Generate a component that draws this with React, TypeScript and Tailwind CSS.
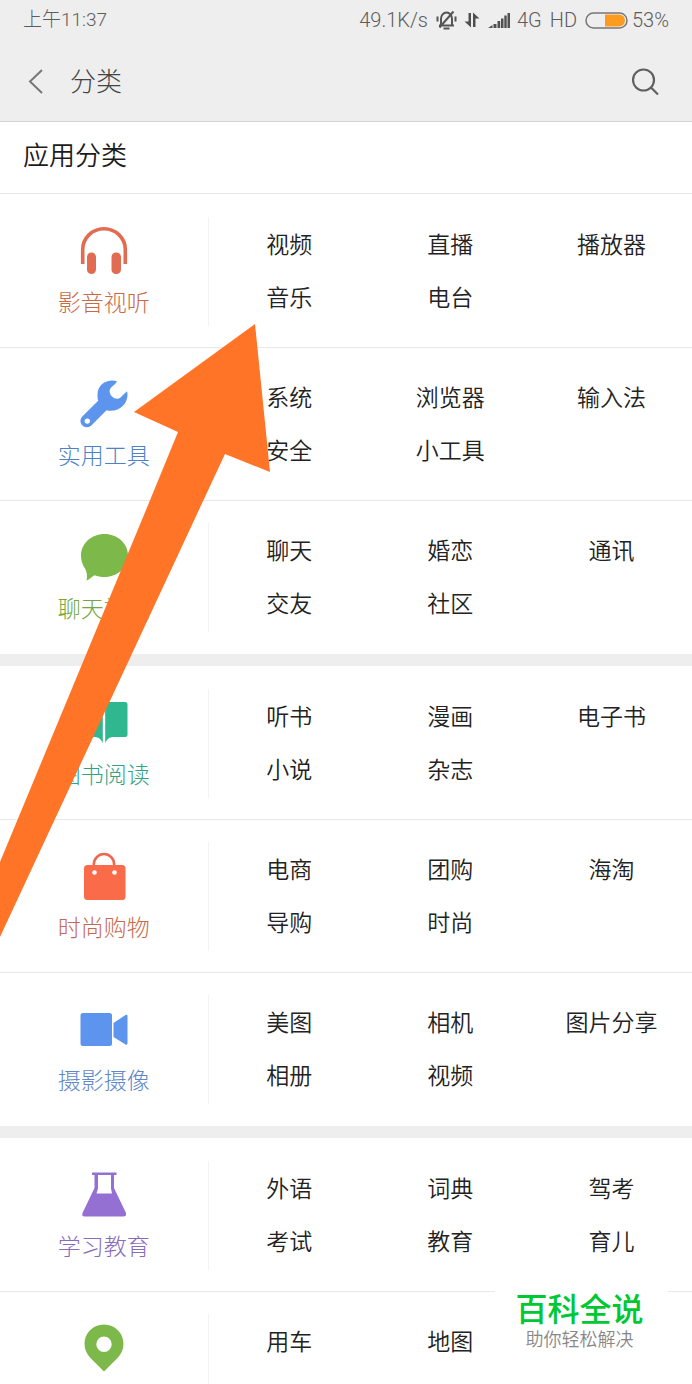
import type { ReactNode } from "react";

type Category = {
  name?: string;
  color: string;
  icon: ReactNode;
  items: string[];
};

const HeadphonesIcon = () => (
  <svg viewBox="0 0 48 48" className="size-12" aria-hidden="true">
    <path d="M2.700 37V22.500a21.300 20.700 0 0 1 42.600 0V37" fill="none" stroke="#e26c51" strokeWidth="3.600" />
    <rect x="7" y="25.500" width="9" height="21.500" rx="4.500" fill="#e26c51" />
    <rect x="31.500" y="25.500" width="9.500" height="21.500" rx="4.500" fill="#e26c51" />
  </svg>
);

const WrenchIcon = () => (
  <svg viewBox="0 0 48 48" className="size-12" aria-hidden="true">
    <path
      fillRule="evenodd"
      fill="#5c94ee"
      d="M37 1.200C29 -1.500 17.500 3 17.500 14.500C17.500 17 17.700 19 18.200 20.800L2.500 36.300C-3 42 3.500 50.500 10.800 46L26.500 30.300C38 33 47.500 24.500 47.500 15C47.500 13.500 47.300 12 46.900 11.300L40.500 17.500C37.500 20 33.500 18.500 31.500 16C29 12.500 29 9.500 31.500 7C33 5.500 35.500 4 37 1.200ZM7.300 38.400a2.700 2.700 0 1 1 0 5.400a2.700 2.700 0 0 1 0 -5.400Z"
    />
  </svg>
);

const ChatIcon = () => (
  <svg viewBox="0 0 48 48" className="size-12" aria-hidden="true">
    <path
      fill="#7cb84a"
      d="M24.500 1C37.500 1 48 10.500 48 22.500S37.500 44 24.500 44C21 44 17.500 43.300 14.500 42.200C12 43.500 9.500 46.500 6.500 47.500C7.500 43.500 7 39 5 35.500C2.500 32 1 27.500 1 22.500C1 10.500 11.500 1 24.500 1Z"
    />
  </svg>
);

const BookIcon = () => (
  <svg viewBox="0 0 48 48" className="size-12" aria-hidden="true">
    <path fill="#2fb78f" d="M3 3H19C21 3 22.800 4 22.800 6V44C20.500 40 19 38 14 38H3Q0.500 38 0.500 35.500V5.500Q0.500 3 3 3Z" />
    <path fill="#2fb78f" d="M45 3H29C27 3 25.200 4 25.200 6V44C27.500 40 29 38 34 38H45Q47.500 38 47.500 35.500V5.500Q47.500 3 45 3Z" />
  </svg>
);

const BagIcon = () => (
  <svg viewBox="0 0 48 48" className="size-12" aria-hidden="true">
    <path d="M13.800 15V12.500a10.200 10.500 0 0 1 20.400 0V15" fill="none" stroke="#e8694d" strokeWidth="2.600" />
    <rect x="4" y="13" width="41.500" height="35" rx="3.500" fill="#fa6b49" />
    <circle cx="14.500" cy="20.500" r="2.300" fill="#fff" />
    <circle cx="34.500" cy="20.500" r="2.300" fill="#fff" />
  </svg>
);

const CameraIcon = () => (
  <svg viewBox="0 0 48 48" className="size-12" aria-hidden="true">
    <rect x="0.500" y="8" width="31.500" height="33" rx="2.500" fill="#5c94ee" />
    <path fill="#5c94ee" d="M33.500 18L45.500 10Q47.500 9 47.500 11V38Q47.500 40.500 45.500 39.500L33.500 32Z" />
  </svg>
);

const FlaskIcon = () => (
  <svg viewBox="0 0 48 48" className="size-12" aria-hidden="true">
    <path
      fillRule="evenodd"
      fill="#9470d3"
      d="M12 1.500H36.500V4H34V17L46 42Q46.500 45.500 43.500 45.500H4.500Q1.500 45.500 2.500 42L14.500 17V4H12ZM18 4V17.500L16.500 22.500H32L31 17.500V4Z"
    />
  </svg>
);

const PinIcon = () => (
  <svg viewBox="0 0 48 48" className="size-12" aria-hidden="true">
    <path
      fillRule="evenodd"
      fill="#7cb84a"
      d="M24 0.500C35 0.500 43.500 9 43.500 20C43.500 25.500 41 30 38 33.500L24 47.500L10 33.500C7 30 4.500 25.500 4.500 20C4.500 9 13 0.500 24 0.500ZM24 12.500a7.700 7.700 0 1 0 0 15.400a7.700 7.700 0 0 0 0 -15.400Z"
    />
  </svg>
);

const groups: Category[][] = [
  [
    { name: "影音视听", color: "text-[#c96a45]", icon: <HeadphonesIcon />, items: ["视频", "直播", "播放器", "音乐", "电台"] },
    { name: "实用工具", color: "text-[#4c82c8]", icon: <WrenchIcon />, items: ["系统", "浏览器", "输入法", "安全", "小工具"] },
    { name: "聊天社交", color: "text-[#74a83c]", icon: <ChatIcon />, items: ["聊天", "婚恋", "通讯", "交友", "社区"] },
  ],
  [
    { name: "图书阅读", color: "text-[#2fa384]", icon: <BookIcon />, items: ["听书", "漫画", "电子书", "小说", "杂志"] },
    { name: "时尚购物", color: "text-[#c9694b]", icon: <BagIcon />, items: ["电商", "团购", "海淘", "导购", "时尚"] },
    { name: "摄影摄像", color: "text-[#6088c8]", icon: <CameraIcon />, items: ["美图", "相机", "图片分享", "相册", "视频"] },
  ],
  [
    { name: "学习教育", color: "text-[#886cbc]", icon: <FlaskIcon />, items: ["外语", "词典", "驾考", "考试", "教育", "育儿"] },
    { color: "text-[#74a83c]", icon: <PinIcon />, items: ["用车", "地图"] },
  ],
];

function StatusBar() {
  return (
    <div className="flex h-10 items-center justify-between px-[23px] font-light text-[#5c5c5c]">
      <span className="text-[19px]">上午11:37</span>
      <div className="flex items-center text-[20px]">
        <span>49.1K/s</span>
        <svg viewBox="0 0 21 20" className="ml-2 h-5 w-[21px]" fill="none" stroke="#555" strokeWidth="2" aria-hidden="true">
          <path d="M5 15V9a5.500 6.500 0 0 1 11 0V15M3 15.500H18M17.500 1.500L3.500 17.500" />
          <path d="M7.500 18.500H13.500" />
          <path d="M1.500 6.500V11.500M19.500 6.500V11.500" />
        </svg>
        <svg viewBox="0 0 16 16" className="ml-[7px] h-4 w-4" fill="#505050" aria-hidden="true">
          <path d="M4.500 1H7V15.500L0.500 9.500H4.500ZM9 0.500L15.500 6.500H11.500V15H9Z" />
        </svg>
        <svg viewBox="0 0 22 16" className="ml-2 h-4 w-[22px]" fill="#505050" aria-hidden="true">
          <path d="M0 16L4.500 13V16ZM5.500 12H8.500V16H5.500ZM9.500 9H12.200V16H9.500ZM13 6.500H15.500V16H13ZM16.300 3.500H18.700V16H16.300ZM19.500 1H22V16H19.500Z" />
        </svg>
        <span className="ml-[7px]">4G</span>
        <span className="ml-2">HD</span>
        <svg viewBox="0 0 43 17" className="ml-2 h-[17px] w-[43px]" aria-hidden="true">
          <path d="M20 2.500H34a6 6 0 0 1 0 12H20Z" fill="#fd9b20" />
          <rect x="1" y="1" width="41" height="15" rx="7.500" fill="none" stroke="#777" strokeWidth="1.500" />
        </svg>
        <span className="ml-1">53%</span>
      </div>
    </div>
  );
}

function CategoryRow({ category, first }: { category: Category; first: boolean }) {
  return (
    <section className={`flex min-h-[153px] border-t ${first ? "border-transparent" : "border-[#e8e8e8]"}`}>
      <a href="#" className={`flex w-[30%] shrink-0 flex-col items-center pt-8 ${category.color}`}>
        {category.icon}
        {category.name && <span className="mt-[13px] text-[23px] leading-8 font-light">{category.name}</span>}
      </a>
      <div className="mt-[22px] mb-[21px] grid flex-1 grid-cols-3 content-start border-l border-[#f3f3f3] pt-[2px] pb-px text-center text-[23px] leading-[53px] text-[#222]">
        {category.items.map((item) => (
          <a key={item} href="#">{item}</a>
        ))}
      </div>
    </section>
  );
}

export default function App() {
  return (
    <div className="relative h-screen overflow-hidden bg-white font-['Roboto','Noto_Sans_CJK_SC',sans-serif] font-[350]">
      {/* Status bar + title */}
      <header className="border-b border-[#d4d4d4] bg-[#eee]">
        <StatusBar />
        <div className="flex h-[81px] items-center pr-8 pl-7">
          <button aria-label="返回">
            <svg viewBox="0 0 16 26" className="h-[26px] w-4" fill="none" stroke="#777" strokeWidth="2" aria-hidden="true">
              <path d="M14 2L2 13.500L14 25" />
            </svg>
          </button>
          <h1 className="ml-[26px] flex-1 pt-[2px] text-[26px] leading-9 font-light text-[#444]">分类</h1>
          <button aria-label="搜索">
            <svg viewBox="0 0 28 28" className="size-7" fill="none" stroke="#606060" strokeWidth="2.200" aria-hidden="true">
              <circle cx="11.500" cy="13" r="10.500" />
              <path d="M19 20.500L26 27.500" />
            </svg>
          </button>
        </div>
      </header>

      <h2 className="border-b border-[#e8e8e8] px-[23px] pt-4 pb-[19px] text-[26px] leading-9 text-[#1c1c1c]">应用分类</h2>

      {/* Category groups */}
      <main>
        {groups.map((group, g) => (
          <div key={g} className={g < groups.length - 1 ? "border-b-12 border-[#eee] pb-px" : ""}>
            {group.map((category, i) => (
              <CategoryRow key={i} category={category} first={i === 0} />
            ))}
          </div>
        ))}
      </main>

      {/* Arrow pointing at 音乐 */}
      <svg viewBox="0 0 272 620" className="pointer-events-none absolute top-80 left-0 h-[620px] w-[272px]" aria-hidden="true">
        <path fill="#ff7427" d="M255 4L134 92L178 112L146 190L0 542V617L225 134L270 152Z" />
      </svg>

      {/* Watermark */}
      <div className="absolute right-6 bottom-6 flex w-[173px] flex-col items-center bg-white pt-6 pr-1 pb-2">
        <p className="text-[32px] leading-9 font-medium text-[#00c832]">百科全说</p>
        <p className="text-[18px] leading-6 text-[#888]">助你轻松解决</p>
      </div>
    </div>
  );
}
